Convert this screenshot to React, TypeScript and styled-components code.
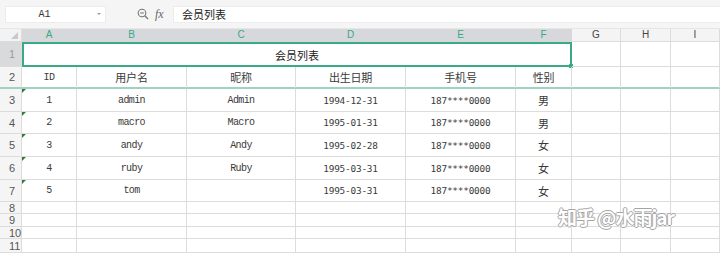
import { Fragment } from 'react';
import styled, { createGlobalStyle } from 'styled-components';

const GlobalStyle = createGlobalStyle`
  html, body {
    margin: 0;
    padding: 0;
    background: #fff;
  }
  body {
    font-family: "Noto Sans", "Noto Sans CJK SC", sans-serif;
    width: 720px;
    height: 253px;
    overflow: hidden;
  }
`;

const GREEN = '#3aa985';
const LINE = '#dcdcdc';

const columns = ['A', 'B', 'C', 'D', 'E', 'F', 'G', 'H', 'I'];
const selectedCols = 6;

type Face = 'mono' | 'sans' | 'cjk';

interface Member {
  id: string;
  username: string;
  nickname: string;
  birthday: string;
  phone: string;
  gender: string;
}

const members: Member[] = [
  { id: '1', username: 'admin', nickname: 'Admin', birthday: '1994-12-31', phone: '187****0000', gender: '男' },
  { id: '2', username: 'macro', nickname: 'Macro', birthday: '1995-01-31', phone: '187****0000', gender: '男' },
  { id: '3', username: 'andy', nickname: 'Andy', birthday: '1995-02-28', phone: '187****0000', gender: '女' },
  { id: '4', username: 'ruby', nickname: 'Ruby', birthday: '1995-03-31', phone: '187****0000', gender: '女' },
  { id: '5', username: 'tom', nickname: '', birthday: '1995-03-31', phone: '187****0000', gender: '女' },
];

const Page = styled.div`
  width: 720px;
  height: 253px;
  display: flex;
  flex-direction: column;
  position: relative;
  overflow: hidden;
`;

const Toolbar = styled.div`
  height: 29px;
  box-sizing: border-box;
  background: #f5f5f6;
  border-bottom: 1px solid #e6e6e6;
  display: flex;
  align-items: center;
  padding-left: 5px;
`;

const NameBox = styled.div`
  width: 101px;
  height: 17px;
  box-sizing: border-box;
  background: #fff;
  border: 1px solid #ececec;
  display: flex;
  align-items: center;
  font-family: "Liberation Mono", monospace;
  font-size: 10px;
  color: #333;
`;

const NameText = styled.span`
  flex: 1;
  text-align: center;
  padding-right: 14px;
`;

const Caret = styled.span`
  width: 0;
  height: 0;
  border-left: 2px solid transparent;
  border-right: 2px solid transparent;
  border-top: 2px solid #999;
  margin-right: 4px;
`;

const Tools = styled.div`
  display: flex;
  align-items: center;
  gap: 6px;
  margin-left: 31px;
  width: 36px;
`;

const Fx = styled.span`
  font-family: "Liberation Serif", serif;
  font-style: italic;
  font-size: 12px;
  color: #666;
`;

const FormulaBox = styled.div`
  flex: 1;
  height: 17px;
  box-sizing: border-box;
  background: #fff;
  border: 1px solid #ececec;
  border-right: none;
  display: flex;
  align-items: center;
  padding-left: 8px;
  font-size: 11px;
  color: #222;
  font-family: "Noto Sans CJK SC", sans-serif;
`;

const Sheet = styled.div`
  display: grid;
  grid-template-columns: 22px 55px 110px 109px 110px 110px 56px 49px 50px 49px;
  grid-template-rows: 13px 25px 22px 23px 22px 23px 23px 22px 12px 13px 12px 14px;
  background: #fff;
`;

const Corner = styled.div`
  background: #f3f3f3;
  border-right: 1px solid ${LINE};
  border-bottom: 1px solid ${LINE};
  box-sizing: border-box;
  display: flex;
  align-items: flex-end;
  justify-content: flex-end;
  padding: 0 3px 2px 0;
`;

const CornerMark = styled.span`
  width: 0;
  height: 0;
  border-left: 7px solid transparent;
  border-bottom: 7px solid #c9c9c9;
`;

const ColHead = styled.div<{ $selected: boolean }>`
  box-sizing: border-box;
  background: ${p => (p.$selected ? '#d6d8db' : '#f4f4f4')};
  color: ${p => (p.$selected ? GREEN : '#444')};
  border-right: 1px solid ${p => (p.$selected ? '#d6d8db' : LINE)};
  border-bottom: 1px solid ${p => (p.$selected ? '#d6d8db' : LINE)};
  font-family: "Liberation Sans", sans-serif;
  font-size: 10px;
  line-height: 12px;
  text-align: center;
`;

const RowHead = styled.div<{ $selected?: boolean; $frozen?: boolean }>`
  box-sizing: border-box;
  background: ${p => (p.$selected ? '#d9dadc' : '#f5f5f5')};
  color: ${p => (p.$selected ? '#9a9a9a' : '#555')};
  border-right: 1px solid ${LINE};
  border-bottom: ${p => (p.$frozen ? '2px solid #9fd2c1' : `1px solid ${LINE}`)};
  font-family: "Liberation Sans", sans-serif;
  font-size: 11px;
  display: flex;
  align-items: center;
  padding-left: 9px;
`;

const TitleCell = styled.div`
  grid-column: span 6;
  box-sizing: border-box;
  border: 2px solid ${GREEN};
  display: flex;
  align-items: center;
  justify-content: center;
  font-family: "Noto Sans CJK SC", sans-serif;
  font-size: 11px;
  color: #222;
  position: relative;

  &::after {
    content: '';
    position: absolute;
    right: -3px;
    bottom: -3px;
    width: 4px;
    height: 4px;
    background: ${GREEN};
  }
`;

const Cell = styled.div<{ $face?: Face; $frozen?: boolean; $mark?: boolean }>`
  box-sizing: border-box;
  border-right: 1px solid ${LINE};
  border-bottom: ${p => (p.$frozen ? '2px solid #9fd2c1' : `1px solid ${LINE}`)};
  display: flex;
  align-items: center;
  justify-content: center;
  color: #3a3a3a;
  position: relative;
  font-family: ${p =>
    p.$face === 'mono'
      ? '"Liberation Mono", monospace'
      : p.$face === 'sans'
      ? '"DejaVu Sans Mono", monospace'
      : '"Noto Sans CJK SC", sans-serif'};
  font-size: ${p => (p.$face === 'cjk' ? '11px' : p.$face === 'sans' ? '9.4px' : '10px')};
  letter-spacing: ${p => (p.$face === 'mono' ? '-0.6px' : '-0.2px')};

  &::before {
    content: '';
    display: ${p => (p.$mark ? 'block' : 'none')};
    position: absolute;
    left: 0;
    top: 0;
    width: 0;
    height: 0;
    border-top: 4px solid #2f7d3a;
    border-right: 4px solid transparent;
  }
`;

const Watermark = styled.div`
  position: absolute;
  left: 558px;
  top: 203px;
  font-family: "Noto Sans CJK SC", sans-serif;
  font-size: 19px;
  font-weight: 700;
  color: #fff;
  letter-spacing: -1px;
  text-shadow:
    1px 0 0 #a5a5a5, -1px 0 0 #a5a5a5, 0 1px 0 #a5a5a5, 0 -1px 0 #a5a5a5;
`;

const headers = ['ID', '用户名', '昵称', '出生日期', '手机号', '性别'];

function ZoomIcon() {
  return (
    <svg width="12" height="12" viewBox="0 0 12 12">
      <circle cx="5" cy="5" r="3.8" fill="none" stroke="#777" strokeWidth="1.1" />
      <line x1="3.2" y1="5" x2="6.8" y2="5" stroke="#777" strokeWidth="1.1" />
      <line x1="7.8" y1="7.8" x2="11" y2="11" stroke="#777" strokeWidth="1.3" />
    </svg>
  );
}

function EmptyCells({ count, frozen }: { count: number; frozen?: boolean }) {
  return (
    <>
      {Array.from({ length: count }).map((_, i) => (
        <Cell key={i} $frozen={frozen} />
      ))}
    </>
  );
}

export default function App() {
  return (
    <Page>
      <GlobalStyle />
      <Toolbar>
        <NameBox>
          <NameText>A1</NameText>
          <Caret />
        </NameBox>
        <Tools>
          <ZoomIcon />
          <Fx>fx</Fx>
        </Tools>
        <FormulaBox>会员列表</FormulaBox>
      </Toolbar>

      <Sheet>
        <Corner>
          <CornerMark />
        </Corner>
        {columns.map((c, i) => (
          <ColHead key={c} $selected={i < selectedCols}>
            {c}
          </ColHead>
        ))}

        <RowHead $selected>1</RowHead>
        <TitleCell>会员列表</TitleCell>
        <EmptyCells count={3} />

        <RowHead $frozen>2</RowHead>
        {headers.map(h => (
          <Cell key={h} $face={h === 'ID' ? 'mono' : 'cjk'} $frozen>
            {h}
          </Cell>
        ))}
        <EmptyCells count={3} frozen />

        {members.map((m, i) => (
          <Fragment key={m.id}>
            <RowHead>{i + 3}</RowHead>
            <Cell $face="mono" $mark>{m.id}</Cell>
            <Cell $face="mono">{m.username}</Cell>
            <Cell $face="mono">{m.nickname}</Cell>
            <Cell $face="sans">{m.birthday}</Cell>
            <Cell $face="sans">{m.phone}</Cell>
            <Cell $face="cjk">{m.gender}</Cell>
            <EmptyCells count={3} />
          </Fragment>
        ))}

        {[8, 9, 10, 11].map(n => (
          <Fragment key={n}>
            <RowHead>{n}</RowHead>
            <EmptyCells count={9} />
          </Fragment>
        ))}
      </Sheet>

      <Watermark>知乎 @水雨jar</Watermark>
    </Page>
  );
}
